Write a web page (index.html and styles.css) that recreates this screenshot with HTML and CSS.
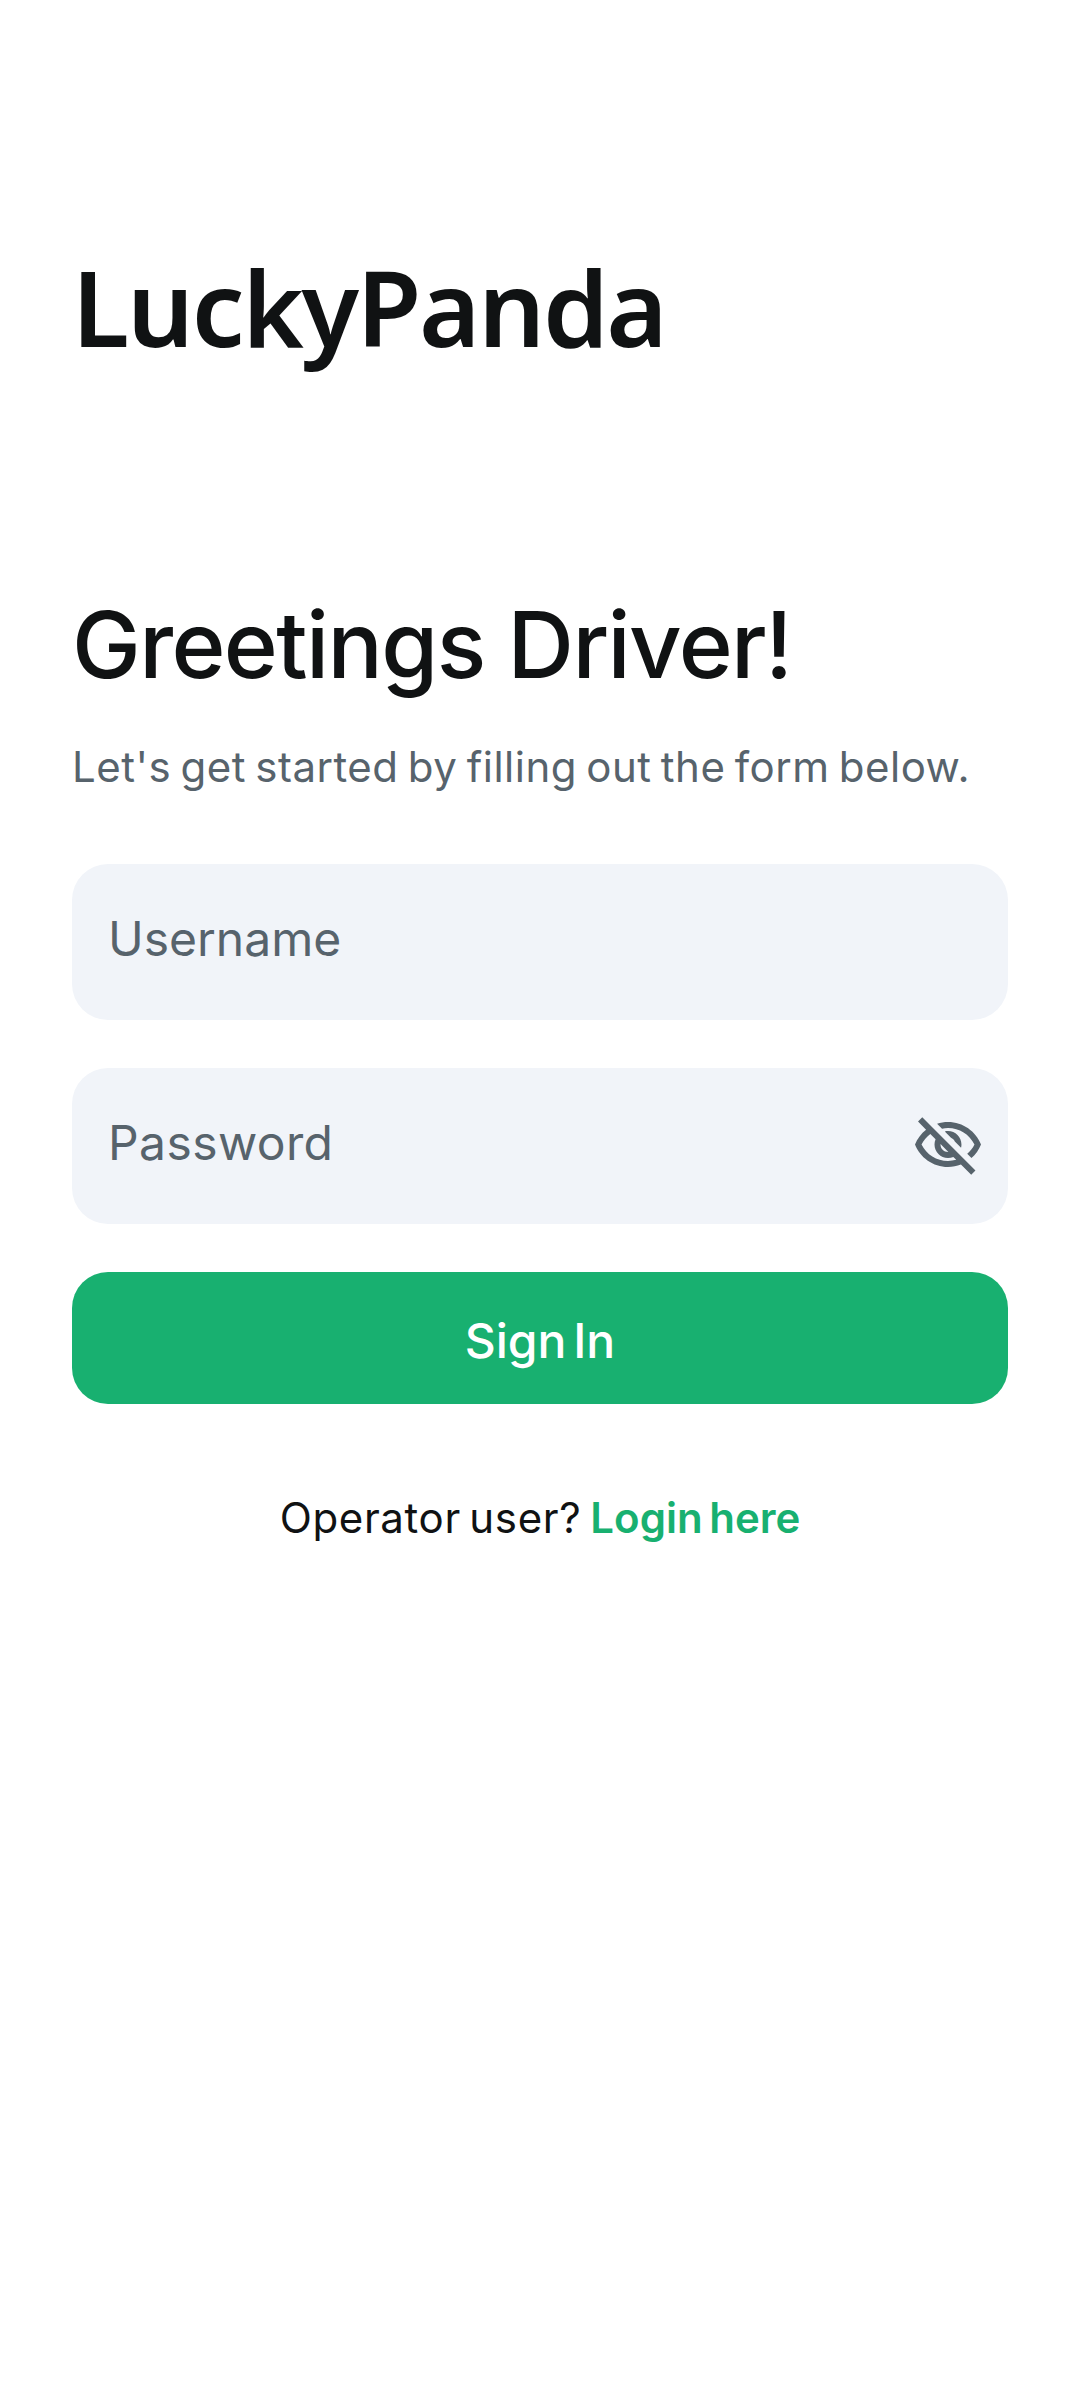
FILE: index.html
```html
<!DOCTYPE html>
<html lang="en">
<head>
<meta charset="utf-8">
<title>LuckyPanda</title>
<link rel="stylesheet" href="styles.css">
</head>
<body>
<main class="page">
  <div class="brand"><span>LuckyPanda</span></div>
  <h1 class="title"><span>Greetings Driver!</span></h1>
  <p class="subtitle"><span>Let's get started by filling out the form below.</span></p>
  <form class="form">
    <div class="field"><span class="username">Username</span></div>
    <div class="field">
      <span class="password">Password</span>
      <svg class="eye" viewBox="0 0 24 24" aria-hidden="true"><path d="M12 6c3.79 0 7.17 2.13 8.82 5.5-.59 1.22-1.42 2.27-2.41 3.12l1.41 1.41c1.39-1.23 2.49-2.77 3.18-4.53C21.27 7.11 17 4 12 4c-1.27 0-2.49.2-3.64.57l1.65 1.65C10.66 6.09 11.32 6 12 6zm-1.07 1.14L13 9.21c.57.25 1.03.71 1.28 1.28l2.07 2.07c.08-.34.14-.7.14-1.07C16.5 9.01 14.48 7 12 7c-.37 0-.72.05-1.07.14zM2.01 3.87l2.68 2.68C3.06 7.83 1.77 9.53 1 11.5 2.73 15.89 7 19 12 19c1.52 0 2.98-.29 4.32-.82l3.42 3.42 1.41-1.41L3.42 2.45 2.01 3.87zm7.5 7.5l2.61 2.61c-.04.01-.08.02-.12.02-1.38 0-2.5-1.12-2.5-2.5 0-.05.01-.08.01-.13zm-3.4-3.4l1.75 1.75c-.23.55-.36 1.15-.36 1.78 0 2.48 2.02 4.5 4.5 4.5.63 0 1.23-.13 1.77-.36l.98.98c-.88.24-1.8.38-2.75.38-3.79 0-7.17-2.13-8.82-5.5.7-1.43 1.72-2.61 2.93-3.53z"/></svg>
    </div>
    <button class="submit" type="button"><span>Sign In</span></button>
  </form>
  <p class="switch"><span class="question">Operator user?</span><a class="link">Login here</a></p>
</main>
</body>
</html>
```
FILE: styles.css
```css
* { box-sizing: border-box; margin: 0; padding: 0; }
body { background: #fff; font-family: Inter, sans-serif; color: #101213; }
.page { display: flex; flex-direction: column; min-height: 2400px; padding: 237px 72px 0; }
.brand { height: 140px; line-height: 140px; font-family: "Noto Sans", sans-serif; font-weight: 600; font-size: 105px; letter-spacing: -2.3px; white-space: nowrap; }
.title { height: 116px; margin-top: 210px; line-height: 116px; font-weight: 500; font-size: 92px; letter-spacing: -1.6px; white-space: nowrap; }
.subtitle { height: 54px; margin-top: 37px; line-height: 54px; font-size: 42px; letter-spacing: 0.5px; word-spacing: -3px; color: #57636c; white-space: nowrap; }
.form { display: flex; flex-direction: column; gap: 48px; margin-top: 70px; }
.field { display: flex; align-items: center; justify-content: space-between; height: 156px; padding: 0 24px 6px 36px; border-radius: 36px; background: #f1f4f9; color: #57636c; font-size: 48px; line-height: 60px; }
.password { letter-spacing: 0.4px; }
.eye { width: 72px; height: 72px; margin-top: 6px; fill: #57636c; }
.submit { height: 132px; padding-top: 5px; border: 0; border-radius: 36px; background: #18b070; color: #fff; font: 500 48px/60px Inter, sans-serif; word-spacing: -6px; }
.switch { display: flex; justify-content: center; gap: 9px; height: 54px; margin-top: 87px; font-size: 42px; line-height: 54px; white-space: nowrap; }
.question { letter-spacing: 0.65px; word-spacing: -4px; }
.link { color: #18b070; font-weight: 600; word-spacing: -4px; }
```
